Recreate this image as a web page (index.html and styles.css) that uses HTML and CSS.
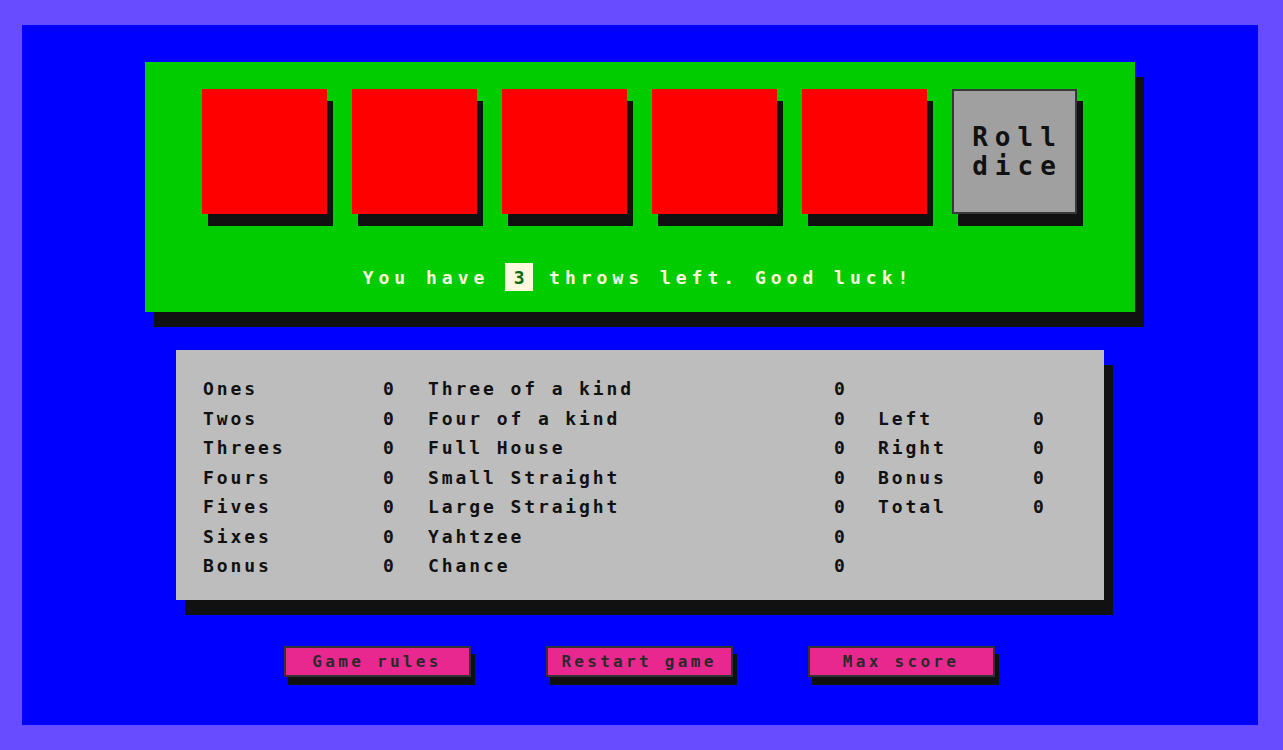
FILE: index.html
```html
<!DOCTYPE html>
<html lang="en">
<head>
<meta charset="utf-8">
<title>Yahtzee</title>
<link rel="stylesheet" href="styles.css">
</head>
<body>
<main class="screen">
  <section class="board">
    <div class="dice-row">
      <div class="die"></div>
      <div class="die"></div>
      <div class="die"></div>
      <div class="die"></div>
      <div class="die"></div>
      <button class="roll"><span class="roll-line">Roll</span><span class="roll-line">dice</span></button>
    </div>
    <p class="status">You have <span class="throws">3</span> throws left. Good luck!</p>
  </section>

  <section class="card">
    <span class="lbl">Ones</span><span class="val">0</span><span class="lbl">Three of a kind</span><span class="val">0</span><span class="lbl"></span><span class="val"></span>
    <span class="lbl">Twos</span><span class="val">0</span><span class="lbl">Four of a kind</span><span class="val">0</span><span class="lbl">Left</span><span class="val">0</span>
    <span class="lbl">Threes</span><span class="val">0</span><span class="lbl">Full House</span><span class="val">0</span><span class="lbl">Right</span><span class="val">0</span>
    <span class="lbl">Fours</span><span class="val">0</span><span class="lbl">Small Straight</span><span class="val">0</span><span class="lbl">Bonus</span><span class="val">0</span>
    <span class="lbl">Fives</span><span class="val">0</span><span class="lbl">Large Straight</span><span class="val">0</span><span class="lbl">Total</span><span class="val">0</span>
    <span class="lbl">Sixes</span><span class="val">0</span><span class="lbl">Yahtzee</span><span class="val">0</span><span class="lbl"></span><span class="val"></span>
    <span class="lbl">Bonus</span><span class="val">0</span><span class="lbl">Chance</span><span class="val">0</span><span class="lbl"></span><span class="val"></span>
  </section>

  <nav class="actions">
    <button class="btn">Game rules</button>
    <button class="btn">Restart game</button>
    <button class="btn">Max score</button>
  </nav>
</main>
</body>
</html>
```

FILE: styles.css
```css
html, body {
  margin: 0;
  padding: 0;
}

body {
  background: #684cff;
  padding: 25px 25px 25px 22px;
  font-family: "DejaVu Sans Mono", "Liberation Mono", monospace;
  font-weight: bold;
}

.screen {
  box-sizing: border-box;
  height: 700px;
  background: #0000ff;
  display: flex;
  flex-direction: column;
  align-items: center;
  padding-top: 37px;
}

.board {
  box-sizing: border-box;
  width: 990px;
  height: 250px;
  background: #00cc00;
  box-shadow: 9px 15px 0 #111111;
  padding-top: 27px;
  display: flex;
  flex-direction: column;
  align-items: center;
}

.dice-row {
  display: flex;
  gap: 25px;
  margin-right: 2px;
}

.die {
  width: 125px;
  height: 125px;
  background: #ff0000;
  box-shadow: 6px 12px 0 #111111;
}

.roll {
  box-sizing: border-box;
  width: 125px;
  height: 125px;
  margin: 0;
  padding: 0 0 0 7px;
  background: #a0a0a0;
  border: 2px solid #383838;
  box-shadow: 6px 12px 0 #111111;
  font-family: inherit;
  font-weight: bold;
  font-size: 26px;
  letter-spacing: 7px;
  color: #111111;
  display: flex;
  flex-direction: column;
  align-items: center;
  justify-content: center;
  gap: 0;
}

.roll-line {
  display: block;
  height: 29px;
  line-height: 29px;
}

.status {
  margin: 49px 0 0;
  height: 28px;
  display: flex;
  align-items: center;
  white-space: pre;
  font-size: 18px;
  letter-spacing: 5px;
  color: #fff8dc;
  padding-right: 4px;
}

.throws {
  display: inline-flex;
  align-items: center;
  justify-content: center;
  width: 28px;
  height: 28px;
  padding-left: 5px;
  box-sizing: border-box;
  background: #fff8dc;
  color: #006a10;
}

.card {
  box-sizing: border-box;
  width: 928px;
  height: 250px;
  margin-top: 38px;
  background: #bdbdbd;
  box-shadow: 9px 15px 0 #111111;
  padding: 24px 0 0 27px;
  display: grid;
  grid-template-columns: 180px 45px 406px 44px 155px 60px;
  grid-auto-rows: 29.5px;
  align-items: center;
  font-size: 18px;
  letter-spacing: 2.9px;
  color: #111111;
  white-space: pre;
}

.actions {
  margin-top: 46px;
  margin-right: 2px;
  display: flex;
  gap: 75px;
}

.btn {
  box-sizing: border-box;
  width: 187px;
  height: 31px;
  margin: 0;
  padding: 0;
  background: #e8288f;
  border: 2px solid #333333;
  box-shadow: 4px 8px 0 #111111;
  font-family: inherit;
  font-weight: bold;
  font-size: 16px;
  letter-spacing: 3.3px;
  color: #2a2a2a;
  text-align: center;
}
```
